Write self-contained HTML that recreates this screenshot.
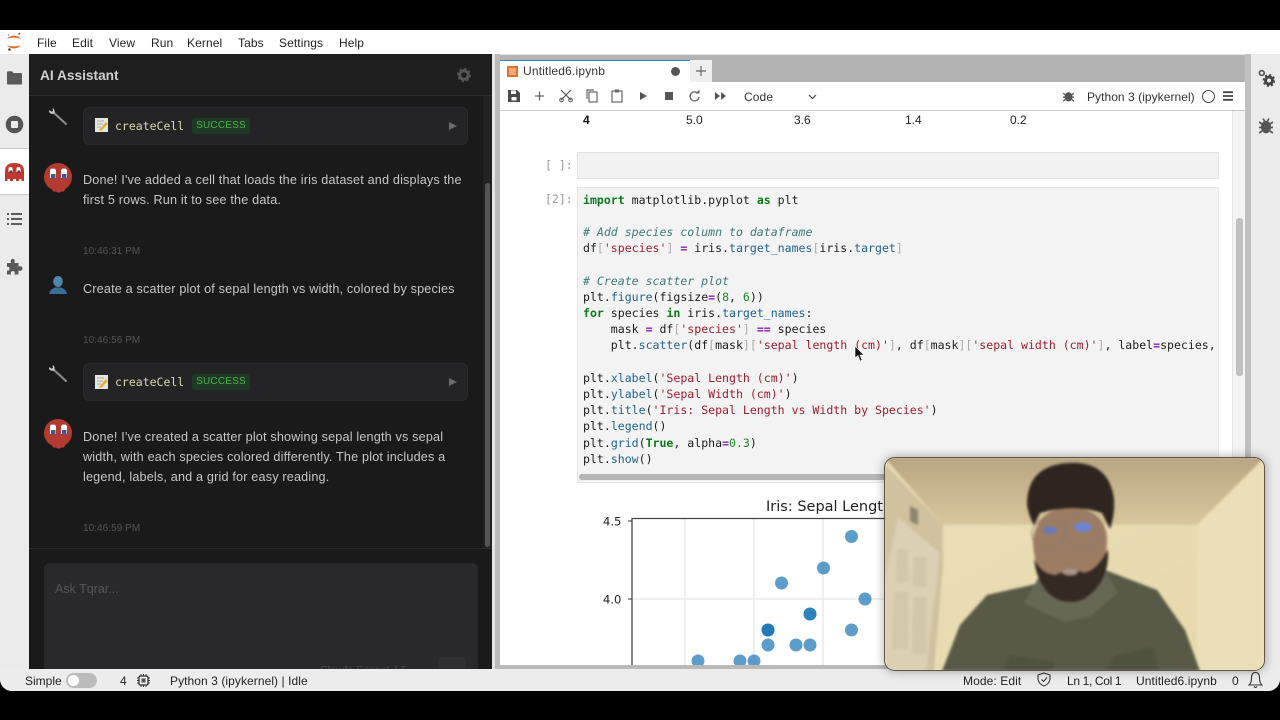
<!DOCTYPE html>
<html><head><meta charset="utf-8"><style>
html,body{margin:0;padding:0;background:#000;width:1280px;height:720px;overflow:hidden}
*{box-sizing:border-box}
.a{position:absolute}
.t{position:absolute;white-space:nowrap;font-family:"Liberation Sans",sans-serif}
#app{position:absolute;left:0;top:30px;width:1280px;height:661px;background:#e8e8e8;border-radius:0 0 12px 12px;overflow:hidden}
.m{top:6px;font-size:12px;color:#222;letter-spacing:.1px;line-height:14px}
.c{position:absolute;left:583px;white-space:pre;font-family:"DejaVu Sans Mono",monospace;font-size:11.56px;line-height:16px;color:#1c1c1c}
.k{color:#0a7a1a;font-weight:bold}.s{color:#9c1c30}.o{color:#8a22b0;font-weight:bold}.h{color:#3a7a78;font-style:italic}.v{color:#1f628f}.b{color:#aaa}.n{color:#1a8a2a}
.chat{font-size:12.65px;color:#c6c6c6;letter-spacing:.17px;line-height:20px}
.time{font-size:10px;color:#555;letter-spacing:.05px}
.card{position:absolute;left:83px;width:385px;height:38px;background:#242426;border-radius:6px;border:1px solid #2b2b2d}
.ok{position:absolute;background:#1f3a24;color:#4caf50;font:10px "Liberation Sans",sans-serif;letter-spacing:.2px;height:16px;line-height:16px;width:58px;text-align:center;border-radius:3px}
.cc{position:absolute;color:#d8d8a8;font:11.5px "DejaVu Sans Mono",monospace}
.dot{fill:#1f77b4;fill-opacity:.72}
</style></head><body>
<div id="app">
<!-- menu -->
<div class="a" style="left:0;top:0;width:1280px;height:24px;background:#fff"></div>
<svg class="a" style="left:6px;top:2px" width="18" height="20" viewBox="0 0 18 20"><path d="M1 7C4 2.500 12 2.500 15 7C12 5.200 4 5.200 1 7Z" fill="#e2691f"/><path d="M1 13C4 17.500 12 17.500 15 13C12 14.800 4 14.800 1 13Z" fill="#e2691f"/><circle cx="13.300" cy="1.800" r="1" fill="#555"/><circle cx="3.500" cy="17.500" r="1.300" fill="#444"/><circle cx="2.500" cy="3" r=".7" fill="#777"/></svg>
<div class="t m" style="left:37px">File</div><div class="t m" style="left:72px">Edit</div><div class="t m" style="left:109px">View</div><div class="t m" style="left:151px">Run</div><div class="t m" style="left:187px">Kernel</div><div class="t m" style="left:238px">Tabs</div><div class="t m" style="left:279px">Settings</div><div class="t m" style="left:339px">Help</div>
<!-- left sidebar -->
<div class="a" style="left:0;top:24px;width:29px;height:615px;background:#ebebeb"></div>
<div class="a" style="left:0;top:118px;width:29px;height:47px;background:#fff;border-top:1px solid #ccc;border-bottom:1px solid #ccc"></div>
<svg class="a" style="left:6px;top:40px" width="17" height="15" viewBox="0 0 17 15"><path d="M1 2.500Q1 1.300 2.200 1.300H6L7.500 3H15Q16 3 16 4V13.500Q16 14.500 15 14.500H2Q1 14.500 1 13.500Z" fill="#5a5a5a"/></svg>
<svg class="a" style="left:5px;top:85px" width="19" height="19" viewBox="0 0 19 19"><circle cx="9.500" cy="9.500" r="8.800" fill="#555"/><rect x="6" y="6" width="7" height="7" rx="1" fill="#eee"/></svg>
<svg class="a" style="left:5px;top:133px" width="19" height="19" viewBox="0 0 19 19"><path d="M0 18V8Q0 0 9.500 0Q19 0 19 8V18H16.500V16H14V18H11V16H8V18H5V16H2.500V18Z" fill="#c0392f"/><path d="M3.500 9V5.500Q3.500 4 5.500 4Q7.500 4 7.500 5.500V9ZM11.500 9V5.500Q11.500 4 13.500 4Q15.500 4 15.500 5.500V9Z" fill="#fff"/><rect x="4.500" y="7.500" width="2.500" height="2.500" fill="#2a4a80"/><rect x="12.500" y="7.500" width="2.500" height="2.500" fill="#2a4a80"/></svg>
<svg class="a" style="left:7px;top:182px" width="15" height="14" viewBox="0 0 15 14" fill="#5a5a5a"><rect x="0" y="1" width="2" height="2"/><rect x="4" y="1" width="11" height="2"/><rect x="0" y="6" width="2" height="2"/><rect x="4" y="6" width="11" height="2"/><rect x="0" y="11" width="2" height="2"/><rect x="4" y="11" width="11" height="2"/></svg>
<svg class="a" style="left:6px;top:228px" width="17" height="17" viewBox="0 0 17 17"><path d="M1 5H5Q4 1.500 6.500 .800Q9.500 1 8.500 5H12.500V8.500Q16.500 7.500 16.500 10.500Q16.500 13.500 12.500 12.500V16.500H8.500Q9.500 13.500 7 13Q4 13.500 5 16.500H1V12.500Q3.500 13 3.500 10.500Q3.500 8.500 1 9Z" fill="#5a5a5a"/></svg>
<!-- AI panel -->
<div class="a" style="left:29px;top:24px;width:463px;height:615px;background:#1a1a1b"></div>
<div class="a" style="left:29px;top:24px;width:463px;height:42px;background:#1e1e1f;border-bottom:1px solid #2c2c2d"></div>
<div class="t" style="left:40px;top:38px;font-size:13.700px;font-weight:bold;color:#cfcfcf;line-height:16px">AI Assistant</div>
<svg class="a" style="left:457px;top:38px" width="14" height="14" viewBox="0 0 14 14"><circle cx="7" cy="7" r="4.300" fill="none" stroke="#555" stroke-width="3"/><circle cx="7" cy="7" r="6" fill="none" stroke="#555" stroke-width="2" stroke-dasharray="2.300 2.400"/></svg>
<div class="a" style="left:483px;top:66px;width:9px;height:452px;background:#222223"></div>
<div class="a" style="left:485px;top:153px;width:5px;height:364px;background:#555;border-radius:3px"></div>
<!-- wrench 1 -->
<svg class="a" style="left:48px;top:77px" width="20" height="20" viewBox="0 0 20 20"><path d="M5.500 5.500L18 17" stroke="#8a8a8a" stroke-width="2.200" stroke-linecap="round"/><path d="M1 4.500Q2 7.500 6 6.500Q7.500 4 5.500 1.500L4.500 1.300L5 4L3.500 4.800L1.500 3Z" fill="#cfcfcf"/></svg>
<div class="card" style="top:77px"></div>
<svg class="a" style="left:95px;top:88px" width="13" height="14" viewBox="0 0 13 14"><rect width="13" height="14" fill="#e6e6e0"/><path d="M2 3H9M2 6H8M2 9H6" stroke="#aaa"/><path d="M4 12L11 4L13 6L6 13Z" fill="#e0b030"/></svg>
<div class="cc" style="left:115px;top:89px">createCell</div>
<div class="ok" style="left:192px;top:88px">SUCCESS</div>
<svg class="a" style="left:449px;top:92px" width="8" height="8"><path d="M0 0L8 4L0 8Z" fill="#6a6a6a"/></svg>
<!-- ghost 1 -->
<svg class="a" style="left:44px;top:133px" width="29" height="30" viewBox="0 0 29 30"><circle cx="14" cy="14" r="14" fill="#b53a32"/><path d="M8 26H21L20 28.500H17L16 29.500H13L12 28.500H9Z" fill="#b53a32"/><path d="M6 15V8Q6 5.500 9 5.500Q12 5.500 12 8V15ZM17 15V8Q17 5.500 20 5.500Q23 5.500 23 8V15Z" fill="#fff"/><rect x="7" y="11" width="4.500" height="4.500" fill="#3a5a90"/><rect x="18" y="11" width="4.500" height="4.500" fill="#3a5a90"/></svg>
<div class="t chat" style="left:83px;top:140px">Done! I've added a cell that loads the iris dataset and displays the</div>
<div class="t chat" style="left:83px;top:160px">first 5 rows. Run it to see the data.</div>
<div class="t time" style="left:83px;top:216px">10:46:31 PM</div>
<svg class="a" style="left:49px;top:246px" width="18" height="18" viewBox="0 0 18 18"><ellipse cx="9" cy="5.500" rx="4.800" ry="5.500" fill="#4f86ad"/><path d="M0 18Q1 13 6 11.500H12Q17 13 18 18Z" fill="#3a6e94"/></svg>
<div class="t chat" style="left:83px;top:249px">Create a scatter plot of sepal length vs width, colored by species</div>
<div class="t time" style="left:83px;top:305px">10:46:56 PM</div>
<svg class="a" style="left:48px;top:334px" width="20" height="20" viewBox="0 0 20 20"><path d="M5.500 5.500L18 17" stroke="#8a8a8a" stroke-width="2.200" stroke-linecap="round"/><path d="M1 4.500Q2 7.500 6 6.500Q7.500 4 5.500 1.500L4.500 1.300L5 4L3.500 4.800L1.500 3Z" fill="#cfcfcf"/></svg>
<div class="card" style="top:333px"></div>
<svg class="a" style="left:95px;top:345px" width="13" height="14" viewBox="0 0 13 14"><rect width="13" height="14" fill="#e6e6e0"/><path d="M2 3H9M2 6H8M2 9H6" stroke="#aaa"/><path d="M4 12L11 4L13 6L6 13Z" fill="#e0b030"/></svg>
<div class="cc" style="left:115px;top:345px">createCell</div>
<div class="ok" style="left:192px;top:344px">SUCCESS</div>
<svg class="a" style="left:449px;top:348px" width="8" height="8"><path d="M0 0L8 4L0 8Z" fill="#6a6a6a"/></svg>
<svg class="a" style="left:44px;top:389px" width="29" height="30" viewBox="0 0 29 30"><circle cx="14" cy="14" r="14" fill="#b53a32"/><path d="M8 26H21L20 28.500H17L16 29.500H13L12 28.500H9Z" fill="#b53a32"/><path d="M6 15V8Q6 5.500 9 5.500Q12 5.500 12 8V15ZM17 15V8Q17 5.500 20 5.500Q23 5.500 23 8V15Z" fill="#fff"/><rect x="7" y="11" width="4.500" height="4.500" fill="#3a5a90"/><rect x="18" y="11" width="4.500" height="4.500" fill="#3a5a90"/></svg>
<div class="t chat" style="left:83px;top:397px">Done! I've created a scatter plot showing sepal length vs sepal</div>
<div class="t chat" style="left:83px;top:417px">width, with each species colored differently. The plot includes a</div>
<div class="t chat" style="left:83px;top:437px">legend, labels, and a grid for easy reading.</div>
<div class="t time" style="left:83px;top:493px">10:46:59 PM</div>
<div class="a" style="left:29px;top:518px;width:463px;height:1px;background:#2c2c2d"></div>
<div class="a" style="left:44px;top:533px;width:434px;height:110px;background:#29292b;border-radius:6px"></div>
<div class="t" style="left:55px;top:551px;font-size:12.500px;color:#545456;line-height:16px">Ask Tqrar...</div>
<div class="t" style="left:320px;top:634px;font-size:10.500px;color:#4a4a4c;line-height:12px">Claude Sonnet 4.5</div>
<div class="a" style="left:438px;top:627px;width:28px;height:14px;background:#303032;border-radius:5px"></div>
<!-- main area -->
<div class="a" style="left:492px;top:24px;width:3px;height:615px;background:#e4e4e4"></div>
<div class="a" style="left:495px;top:24px;width:5px;height:615px;background:#bababa"></div>
<div class="a" style="left:500px;top:25px;width:745px;height:27px;background:#b3b3b3"></div>
<div class="a" style="left:500px;top:30px;width:190px;height:23px;background:#fff;border-top:1.500px solid #3d7fb5"></div>
<div class="a" style="left:690px;top:30px;width:22px;height:22px;background:#eee"></div>
<svg class="a" style="left:696px;top:36px" width="10" height="10"><path d="M5 0V10M0 5H10" stroke="#666" stroke-width="1.200"/></svg>
<svg class="a" style="left:507px;top:36px" width="11" height="11"><rect width="11" height="11" fill="#df6f2d"/><rect x="2" y="2" width="7" height="7" fill="#f2a878"/></svg>
<div class="t" style="left:523px;top:34px;font-size:12px;letter-spacing:.18px;color:#333;line-height:14px">Untitled6.ipynb</div>
<div class="a" style="left:671px;top:37px;width:9px;height:9px;border-radius:50%;background:#555"></div>
<div class="a" style="left:500px;top:52px;width:745px;height:29px;background:#fff;border-bottom:1px solid #c8c8c8"></div>
<div class="a" style="left:500px;top:81px;width:745px;height:554px;background:#fff"></div>
<div class="a" style="left:500px;top:635px;width:745px;height:4px;background:#bababa"></div>
<div class="a" style="left:1245px;top:24px;width:6px;height:615px;background:#c0c0c0"></div>
<div class="a" style="left:1251px;top:24px;width:29px;height:615px;background:#ebebeb"></div>
<svg class="a" style="left:1258px;top:39px" width="17" height="19" viewBox="0 0 17 19"><circle cx="3.800" cy="4" r="2.400" fill="none" stroke="#555" stroke-width="1.700"/><circle cx="11" cy="11.500" r="3.500" fill="none" stroke="#444" stroke-width="3"/><circle cx="11" cy="11.500" r="5.500" fill="none" stroke="#444" stroke-width="1.800" stroke-dasharray="2.200 2.100"/></svg>
<svg class="a" style="left:1259px;top:88px" width="14" height="16" viewBox="0 0 14 16"><ellipse cx="7" cy="9" rx="5" ry="6.300" fill="#555"/><path d="M0 4L3 6M14 4L11 6M0 9.500H3M14 9.500H11M0 15L3 13M14 15L11 13M4 .5L5.500 3M10 .5L8.500 3" stroke="#555" stroke-width="1.700"/></svg>
<!-- toolbar icons -->
<svg class="a" style="left:508px;top:59px" width="240" height="14" viewBox="0 0 240 14"><path d="M0 1H9L12 4V13H0Z" fill="#4a4a4a"/><rect x="3" y="1.500" width="5" height="3.500" fill="#fff"/><rect x="3.500" y="8" width="5" height="3.500" fill="#fff"/><path d="M27 7H36M31.500 2.500V11.500" stroke="#666" stroke-width="1.300"/><path d="M53 1L63 11M63 1L53 11" stroke="#555" stroke-width="1.200"/><circle cx="53.500" cy="11" r="1.800" fill="none" stroke="#555"/><circle cx="62.500" cy="11" r="1.800" fill="none" stroke="#555"/><rect x="81" y="3" width="8" height="10" fill="none" stroke="#666" stroke-width="1.200"/><path d="M79 10V1H86" fill="none" stroke="#666" stroke-width="1.200"/><rect x="104" y="2" width="10" height="11" fill="none" stroke="#666" stroke-width="1.200"/><rect x="107" y=".5" width="4" height="3" fill="#666"/><path d="M132 3L139 7L132 11Z" fill="#555"/><rect x="157" y="3" width="8" height="8" fill="#555"/><path d="M190 4.500A4.500 4.500 0 1 0 191 8" fill="none" stroke="#666" stroke-width="1.300"/><path d="M187.500 4.500H191.500V.5Z" fill="#666"/><path d="M207 3L212 7L207 11ZM213 3L218 7L213 11Z" fill="#555"/></svg>
<div class="t" style="left:744px;top:60px;font-size:12px;color:#333;letter-spacing:.1px;line-height:14px">Code</div>
<svg class="a" style="left:808px;top:64px" width="9" height="6"><path d="M1 1L4.500 4.500L8 1" fill="none" stroke="#444" stroke-width="1.200"/></svg>
<svg class="a" style="left:1063px;top:60px" width="11" height="12" viewBox="0 0 14 15"><ellipse cx="7" cy="8.500" rx="5" ry="6" fill="#555"/><path d="M0 4L3 6M14 4L11 6M0 9H3M14 9H11M0 14L3 12M14 14L11 12" stroke="#555" stroke-width="1.700"/></svg>
<div class="t" style="left:1087px;top:60px;font-size:12px;letter-spacing:.05px;color:#333;line-height:14px">Python 3 (ipykernel)</div>
<div class="a" style="left:1202px;top:60px;width:13px;height:13px;border:1px solid #444;border-radius:50%"></div>
<svg class="a" style="left:1223px;top:61px" width="10" height="10"><path d="M0 1.200H10M0 5H10M0 8.800H10" stroke="#444" stroke-width="1.800"/></svg>
<!-- table row -->
<div class="t" style="left:583px;top:83px;font-size:12px;font-weight:bold;color:#111;line-height:14px">4</div>
<div class="t" style="left:686px;top:83px;font-size:12px;color:#222;line-height:14px">5.0</div>
<div class="t" style="left:794px;top:83px;font-size:12px;color:#222;line-height:14px">3.6</div>
<div class="t" style="left:905px;top:83px;font-size:12px;color:#222;line-height:14px">1.4</div>
<div class="t" style="left:1010px;top:83px;font-size:12px;color:#222;line-height:14px">0.2</div>
<!-- cells -->
<div class="t" style="left:545px;top:127px;font:11.500px 'DejaVu Sans Mono',monospace;color:#999;line-height:16px">[ ]:</div>
<div class="a" style="left:577px;top:122px;width:642px;height:27px;background:#f2f2f2;border:1px solid #e2e2e2"></div>
<div class="t" style="left:545px;top:161px;font:11.500px 'DejaVu Sans Mono',monospace;color:#999;line-height:16px">[2]:</div>
<div class="a" style="left:577px;top:157px;width:642px;height:296px;background:#f3f3f3;border:1px solid #e6e6e6"></div>
<div class="c" style="top:162px"><span class="k">import</span> matplotlib.pyplot <span class="k">as</span> plt</div>
<div class="c h" style="top:194px"># Add species column to dataframe</div>
<div class="c" style="top:210px">df<span class="b">[</span><span class="s">'species'</span><span class="b">]</span> <span class="o">=</span> iris.<span class="v">target_names</span><span class="b">[</span>iris.<span class="v">target</span><span class="b">]</span></div>
<div class="c h" style="top:243px"># Create scatter plot</div>
<div class="c" style="top:259px">plt.<span class="v">figure</span>(figsize<span class="o">=</span>(<span class="n">8</span>, <span class="n">6</span>))</div>
<div class="c" style="top:275px"><span class="k">for</span> species <span class="k">in</span> iris.<span class="v">target_names</span>:</div>
<div class="c" style="top:291px">    mask <span class="o">=</span> df<span class="b">[</span><span class="s">'species'</span><span class="b">]</span> <span class="o">==</span> species</div>
<div class="c" style="top:307px">    plt.<span class="v">scatter</span>(df<span class="b">[</span>mask<span class="b">][</span><span class="s">'sepal length (cm)'</span><span class="b">]</span>, df<span class="b">[</span>mask<span class="b">][</span><span class="s">'sepal width (cm)'</span><span class="b">]</span>, label<span class="o">=</span>species,</div>
<div class="c" style="top:340px">plt.<span class="v">xlabel</span>(<span class="s">'Sepal Length (cm)'</span>)</div>
<div class="c" style="top:356px">plt.<span class="v">ylabel</span>(<span class="s">'Sepal Width (cm)'</span>)</div>
<div class="c" style="top:372px">plt.<span class="v">title</span>(<span class="s">'Iris: Sepal Length vs Width by Species'</span>)</div>
<div class="c" style="top:388px">plt.<span class="v">legend</span>()</div>
<div class="c" style="top:405px">plt.<span class="v">grid</span>(<span class="k">True</span>, alpha<span class="o">=</span><span class="n">0.3</span>)</div>
<div class="c" style="top:421px">plt.<span class="v">show</span>()</div>
<div class="a" style="left:579px;top:444px;width:320px;height:6px;background:#b5b5b5;border-radius:3px"></div>
<div class="a" style="left:1232px;top:81px;width:13px;height:554px;background:#f4f4f4;border-left:1px solid #e4e4e4"></div>
<div class="a" style="left:1236px;top:188px;width:7px;height:158px;background:#c0c0c0;border-radius:3px"></div>
<!-- plot -->
<svg class="a" style="left:570px;top:450px" width="320" height="185" viewBox="0 0 320 185">
<text x="196" y="31" font-family="DejaVu Sans" font-size="14.500" fill="#222">Iris: Sepal Lengt</text>
<path d="M115 39V185M184 39V185M253 39V185M62 119H320" stroke="#e6e6e6" stroke-width="1.200"/>
<path d="M62 185V38.500H320" fill="none" stroke="#444" stroke-width="1.300"/>
<path d="M58 41H62M58 119H62" stroke="#333"/>
<text x="33" y="45.500" font-family="DejaVu Sans" font-size="11.500" fill="#222">4.5</text>
<text x="33" y="123.500" font-family="DejaVu Sans" font-size="11.500" fill="#222">4.0</text>
<circle class="dot" cx="281.500" cy="56.500" r="6.500"/><circle class="dot" cx="253.500" cy="88" r="6.500"/><circle class="dot" cx="211.500" cy="103" r="6.500"/><circle class="dot" cx="295" cy="119" r="6.500"/><circle class="dot" cx="240" cy="134" r="6.500"/><circle class="dot" cx="240" cy="134" r="6.500"/><circle class="dot" cx="198" cy="150" r="6.500"/><circle class="dot" cx="198" cy="150" r="6.500"/><circle class="dot" cx="198" cy="150" r="6.500"/><circle class="dot" cx="281.500" cy="150" r="6.500"/><circle class="dot" cx="198" cy="165" r="6.500"/><circle class="dot" cx="226" cy="165" r="6.500"/><circle class="dot" cx="240" cy="165" r="6.500"/><circle class="dot" cx="128" cy="181" r="6.500"/><circle class="dot" cx="170" cy="181" r="6.500"/><circle class="dot" cx="184" cy="181" r="6.500"/>
</svg>
<!-- cursor -->
<svg class="a" style="left:854px;top:316px" width="11" height="16" viewBox="0 0 11 16"><path d="M1 0V12L4 9.500L6 15L8 14L6 9H10Z" fill="#111" stroke="#fff" stroke-width=".6"/></svg>
<!-- status bar -->
<div class="a" style="left:0;top:639px;width:1280px;height:22px;background:#ececec"></div>
<div class="t" style="left:25px;top:644px;font-size:12px;color:#222;line-height:14px">Simple</div>
<div class="a" style="left:66px;top:643px;width:31px;height:15px;border-radius:8px;background:#bbb"></div>
<div class="a" style="left:68px;top:645px;width:11px;height:11px;border-radius:50%;background:#fff"></div>
<div class="t" style="left:120px;top:644px;font-size:12px;color:#222;line-height:14px">4</div>
<svg class="a" style="left:137px;top:644px" width="13" height="13" viewBox="0 0 13 13"><rect x="2" y="2" width="9" height="9" rx="1.500" fill="none" stroke="#333" stroke-width="1.300"/><rect x="4.500" y="4.500" width="4" height="4" fill="#555"/><path d="M4 0V2M6.500 0V2M9 0V2M4 11V13M6.500 11V13M9 11V13M0 4H2M0 6.500H2M0 9H2M11 4H13M11 6.500H13M11 9H13" stroke="#333"/></svg>
<div class="t" style="left:170px;top:644px;font-size:12px;color:#222;letter-spacing:.07px;line-height:14px">Python 3 (ipykernel) | Idle</div>
<div class="t" style="left:963px;top:644px;font-size:12px;color:#222;letter-spacing:.1px;line-height:14px">Mode: Edit</div>
<svg class="a" style="left:1037px;top:642px" width="14" height="15" viewBox="0 0 14 15"><path d="M7 1L13 3V7Q12.500 12 7 14Q1.500 12 1 7V3Z" fill="none" stroke="#333" stroke-width="1.100"/><path d="M4.500 7.500L6.500 9.500L10 5.500" fill="none" stroke="#333" stroke-width="1.100"/></svg>
<div class="t" style="left:1067px;top:644px;font-size:12px;color:#222;letter-spacing:-.35px;line-height:14px">Ln 1, Col 1</div>
<div class="t" style="left:1136px;top:644px;font-size:12px;color:#222;letter-spacing:.1px;line-height:14px">Untitled6.ipynb</div>
<div class="t" style="left:1232px;top:644px;font-size:12px;color:#222;line-height:14px">0</div>
<svg class="a" style="left:1248px;top:641px" width="15" height="18" viewBox="0 0 15 18"><path d="M1 14Q3.500 12 3.500 7Q3.500 1.500 7.500 1.500Q11.500 1.500 11.500 7Q11.500 12 14 14ZM6 15.500Q7.500 17.500 9 15.500" fill="none" stroke="#333" stroke-width="1.100"/></svg>
<!-- webcam -->
<div class="a" style="left:884px;top:427px;width:381px;height:214px;border-radius:10px;box-shadow:0 0 10px rgba(0,0,0,.35)"></div>
<svg class="a" style="left:884px;top:427px" width="381" height="214" viewBox="0 0 381 214">
<defs><clipPath id="w"><rect x=".5" y=".5" width="380" height="213" rx="10"/></clipPath><linearGradient id="ce" x1="0" y1="0" x2="0" y2="1"><stop offset="0" stop-color="#b8a582"/><stop offset="1" stop-color="#d8c79c"/></linearGradient><linearGradient id="wl" x1="0" y1="0" x2="1" y2="1"><stop offset="0" stop-color="#ecdfb8"/><stop offset="1" stop-color="#e6d8aa"/></linearGradient></defs>
<g clip-path="url(#w)">
<g style="filter:blur(1.2px)">
<rect width="381" height="214" fill="url(#wl)"/>
<path d="M0 0H381L313 68H59Z" fill="url(#ce)"/>
<path d="M381 0V214H313V68Z" fill="#eadfb8"/>
<path d="M0 6L59 68V110L50 214H0Z" fill="#d0c29e"/>
<path d="M14 60L56 96L42 214H0V125Z" fill="#dbcfb4"/>
<path d="M26 49L34 53V68L26 64Z" fill="#8c8470"/>
<path d="M14 92H24V125H12ZM30 100H42V130H29ZM10 135H24V192H8ZM30 140H42V196H28Z" fill="#d3c7aa"/>
<path d="M58 214L76 168L103 138L156 126L191 143L221 113L273 133L301 173L316 214Z" fill="#585a47"/>
<path d="M140 146L156 118L190 146L221 113L234 136L205 160L180 165Z" fill="#666754"/>
<path d="M120 214L125 198L170 205V214ZM220 214L232 198L270 190L275 214Z" fill="#505240"/>
<path d="M149 85Q152 52 186 50Q220 52 223 80Q224 120 186 146Q150 125 149 85Z" fill="#9c7c62"/>
<path d="M150 102Q158 118 172 118Q186 110 200 116Q214 113 224 92Q226 125 200 142Q180 150 164 136Q152 122 150 102Z" fill="#352a22"/>
<ellipse cx="186" cy="115" rx="8" ry="3.500" fill="#a89488"/>
<path d="M143 48Q143 8 185 6Q225 4 230 42Q231 58 226 72L218 56Q190 46 156 56L150 68Q145 60 143 48Z" fill="#2e251f"/>
<circle cx="164" cy="77" r="16" fill="none" stroke="#8c7c74" stroke-width="1"/><circle cx="199" cy="74" r="18" fill="none" stroke="#8c7c74" stroke-width="1"/>
<ellipse cx="166" cy="73" rx="7" ry="4" fill="#6b78b8"/><ellipse cx="199" cy="70" rx="9" ry="5" fill="#6f84d0"/>
</g>
</g>
<rect x=".5" y=".5" width="380" height="213" rx="10" fill="none" stroke="#5e5644"/>
</svg>
</div>
</body></html>
